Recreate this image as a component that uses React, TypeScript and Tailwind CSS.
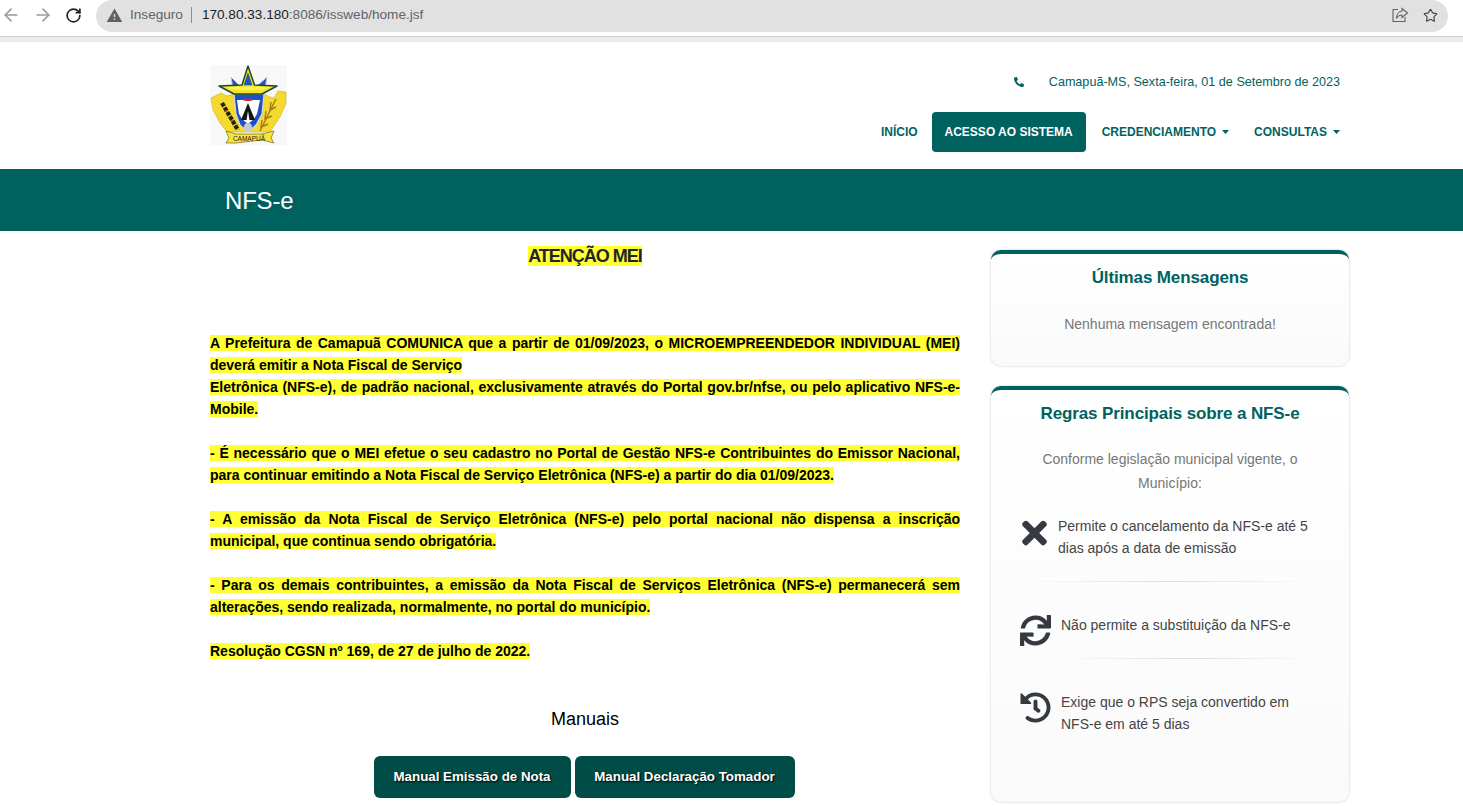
import React from 'react';
import { ArrowLeft, ArrowRight, RotateCw, Star } from 'lucide-react';
import { FaTimes, FaSync, FaHistory, FaPhone } from 'react-icons/fa';
import { MdWarning } from 'react-icons/md';

const CoatOfArms: React.FC = () => (
  <svg viewBox="0 0 77 80" className="w-[77px] h-[80px] bg-[#f8f8f8]">
    {/* side wreath */}
    <path d="M1 33 L11 28 L17 31 L24 29 L54 29 L60 32 L64 33 L68 26 L76 27 L76 38 L70 52 L60 67 L17 67 L10 58 L3 45 Z" fill="#f6d92f" stroke="#c0a622" strokeWidth="0.5" />
    {/* blue points behind the star */}
    <path d="M21 12 L30 21 L47 21 L57 12 L54 30 L24 30 Z" fill="#1f55cc" stroke="#c4c8d6" strokeWidth="1" />
    {/* shield */}
    <path d="M24 29 L54 29 L52 49 L46 60 L38 67 L30 60 L26 49 Z" fill="#1f4fc4" stroke="#d4d7e0" strokeWidth="1.2" />
    <path d="M27 35 L50 35 L47 49 L44 54 L38 59 L32 54 L29 49 Z" fill="#ffffff" />
    <path d="M38 38 L31 55 L36.5 55 L38 46 L39.5 55 L45 55 Z" fill="#141414" />
    <path d="M34 36 L35 33 L38 35 L41 33 L42 36 Z" fill="#e5352a" />
    <circle cx="38" cy="62" r="4" fill="#c6c9cf" />
    {/* star */}
    <path d="M38 1 L44.5 20 L67 21 L52 29 L24 29 L9 21 L32 20 Z" fill="#f4e52c" stroke="#1e4a2c" strokeWidth="1.5" strokeLinejoin="round" />
    <path d="M38 8 L34 20 L42 20 Z" fill="#1f55cc" stroke="#1e4a2c" strokeWidth="0.5" />
    <path d="M15 22 L61 22 L52 25 L24 25 Z" fill="#fdf15a" />
    {/* branches */}
    <path d="M12 38 L28 65" stroke="#1e2410" strokeWidth="4.2" strokeDasharray="4 1.2" />
    <circle cx="16" cy="46" r="1" fill="#c2372a" />
    <circle cx="22" cy="56" r="1" fill="#c2372a" />
    <path d="M66 34 L50 66 M61 37 L60 45 L66 42 M56 46 L55 54 L62 51 M52 55 L51 62 L58 59" stroke="#a67a18" strokeWidth="1.4" fill="none" />
    {/* ribbon */}
    <path d="M16 66 L26 69 L52 69 L64 66 L61 73 L64 78 L52 75 L26 78 L16 78 L19 73 Z" fill="#f7e53a" stroke="#5a5210" strokeWidth="0.6" />
    <text x="39" y="76" textAnchor="middle" fontSize="6.5" fontFamily="Liberation Sans, sans-serif" fill="#222222">CAMAPUÃ</text>
  </svg>
);

const ShareIcon: React.FC = () => (
  <svg viewBox="0 0 18 18" className="w-[18px] h-[18px]" fill="none" stroke="#5f6368" strokeWidth="1.1">
    <path d="M7 3.5 H2 V15.5 H14 V11" />
    <path d="M11 2.5 L16.5 7 L11 11.5 V9 C8 9 6.5 10.5 5.5 12.5 C5.5 9 7.5 5.5 11 5 Z" />
  </svg>
);

const Caret: React.FC = () => (
  <svg viewBox="0 0 7 4" className="ml-[6px] mt-[-1px] w-[7px] h-[4px]">
    <path d="M0 0 H7 L3.5 4 Z" fill="#00625f" />
  </svg>
);

const BrowserBar: React.FC = () => (
  <div className="h-[37px] bg-white border-b border-[#cfcfcf] flex items-start">
    <div className="w-[96px] flex items-center h-[32px] pl-[1px] pb-[2px]">
      <ArrowLeft size={20} className="text-[#9b9b9b]" />
      <ArrowRight size={20} className="ml-[12px] text-[#9b9b9b]" />
      <RotateCw size={17} strokeWidth={2.4} className="ml-[12px] text-[#222222]" />
    </div>
    <div className="w-[1352px] h-[32px] bg-[#e1e1e1] rounded-[16px] flex items-center px-[10px] pb-[2px]">
      <MdWarning size={17} className="text-[#5f6368]" />
      <span className="ml-[7px] text-[#5f6368] text-[13.6px]">Inseguro</span>
      <span className="w-px h-[16px] bg-[#8d8d8d] mx-[8px]" />
      <span className="ml-[2px] text-[#202124] text-[13.6px]">170.80.33.180<span className="text-[#5f6368]">:8086/issweb/home.jsf</span></span>
      <div className="ml-auto flex items-center">
        <ShareIcon />
        <Star size={15} strokeWidth={1.8} className="ml-[14px] text-[#444444]" />
      </div>
    </div>
  </div>
);

const Header: React.FC = () => (
  <header className="h-[127px] bg-white flex justify-between pl-[210px] pr-[123px]">
    <div className="pt-[23px]">
      <CoatOfArms />
    </div>
    <div className="flex flex-col items-end">
      <div className="mt-[31px] h-[18px] flex items-center text-[12.6px] text-[#00625f]">
        <FaPhone size={10} className="mr-[25px] scale-x-[-1]" />
        <span>Camapuã-MS, Sexta-feira, 01 de Setembro de 2023</span>
      </div>
      <nav className="mt-[21px] flex items-center text-[12px] font-bold text-[#00625f]">
        <a className="mr-[14px]">INÍCIO</a>
        <a className="h-[40px] w-[154px] flex items-center justify-center bg-[#00625f] text-white rounded-[4px]">ACESSO AO SISTEMA</a>
        <a className="ml-[16px] flex items-center">CREDENCIAMENTO<Caret /></a>
        <a className="ml-[25px] flex items-center">CONSULTAS<Caret /></a>
      </nav>
    </div>
  </header>
);

const Notice: React.FC<{ children: React.ReactNode }> = ({ children }) => (
  <p className="text-justify mb-[22px]">
    <span className="bg-[#ffff33]">{children}</span>
  </p>
);

const MainColumn: React.FC = () => (
  <section className="w-[750px] text-black">
    <h2 className="text-center text-[18px] leading-[20px] font-bold text-[#212529] tracking-[-1px] mt-[15px]">
      <span className="bg-[#ffff33]">ATENÇÃO MEI</span>
    </h2>
    <div className="mt-[66px] text-[14px] leading-[22px] font-bold">
      <Notice>
        A Prefeitura de Camapuã COMUNICA que a partir de 01/09/2023, o MICROEMPREENDEDOR INDIVIDUAL (MEI) deverá emitir a Nota Fiscal de Serviço
        <br />
        Eletrônica (NFS-e), de padrão nacional, exclusivamente através do Portal gov.br/nfse, ou pelo aplicativo NFS-e-Mobile.
      </Notice>
      <Notice>
        - É necessário que o MEI efetue o seu cadastro no Portal de Gestão NFS-e Contribuintes do Emissor Nacional, para continuar emitindo a Nota Fiscal de Serviço Eletrônica (NFS-e) a partir do dia 01/09/2023.
      </Notice>
      <Notice>
        - A emissão da Nota Fiscal de Serviço Eletrônica (NFS-e) pelo portal nacional não dispensa a inscrição municipal, que continua sendo obrigatória.
      </Notice>
      <Notice>
        - Para os demais contribuintes, a emissão da Nota Fiscal de Serviços Eletrônica (NFS-e) permanecerá sem alterações, sendo realizada, normalmente, no portal do município.
      </Notice>
      <Notice>Resolução CGSN nº 169, de 27 de julho de 2022.</Notice>
    </div>
    <h3 className="text-center text-[18px] leading-[22px] mt-[46px]">Manuais</h3>
    <div className="mt-[26px] flex justify-center gap-[4px] pr-[2px]">
      <a className="h-[42px] w-[197px] flex items-center justify-center rounded-[6px] bg-[#004d47] text-white text-[13.33px] font-bold [text-shadow:1px_1px_2px_#000000]">Manual Emissão de Nota</a>
      <a className="h-[42px] w-[220px] flex items-center justify-center rounded-[6px] bg-[#004d47] text-white text-[13.33px] font-bold [text-shadow:1px_1px_2px_#000000]">Manual Declaração Tomador</a>
    </div>
  </section>
);

const Card: React.FC<{ title: string; className: string; children: React.ReactNode }> = ({ title, className, children }) => (
  <div className={`rounded-[10px] border-t-4 border-[#00625f] bg-gradient-to-b from-white to-[#fafafa] shadow-[0_0_2px_rgba(0,0,0,0.3)] ${className}`}>
    <h4 className="text-center text-[17px] tracking-[-0.12px] leading-[22px] font-bold text-[#00625f] mt-[13px]">{title}</h4>
    {children}
  </div>
);

const Rule: React.FC<{ icon: React.ReactNode; textClass: string; children: React.ReactNode }> = ({ icon, textClass, children }) => (
  <div className="flex items-start pl-[29px] text-[14px] leading-[22px] text-[#444444]">
    {icon}
    <p className={textClass}>{children}</p>
  </div>
);

const Divider: React.FC<{ className: string }> = ({ className }) => (
  <div className={`h-px bg-gradient-to-r from-transparent via-[#dddddd] to-transparent ${className}`} />
);

const Sidebar: React.FC = () => (
  <aside className="w-[358px] ml-[31px] pt-[19px] flex flex-col gap-[20px]">
    <Card title="Últimas Mensagens" className="h-[116px]">
      <p className="text-center text-[14px] leading-[24px] text-[#777777] mt-[23px]">Nenhuma mensagem encontrada!</p>
    </Card>
    <Card title="Regras Principais sobre a NFS-e" className="h-[416px]">
      <p className="text-center text-[14px] leading-[24px] text-[#777777] mt-[22px] px-[40px]">
        Conforme legislação municipal vigente, o Município:
      </p>
      <div className="mt-[20px]">
        <Rule icon={<FaTimes className="w-[25px] h-[36px] text-[#343a40] ml-[2px] mr-[11px] shrink-0" />} textClass="w-[255px]">
          Permite o cancelamento da NFS-e até 5 dias após a data de emissão
        </Rule>
        <Divider className="mt-[22px] mx-[30px]" />
        <Rule icon={<FaSync size={31} className="text-[#343a40] mt-[33px] mr-[10px] -mb-[10px] shrink-0" />} textClass="w-[255px] mt-[32px]">
          Não permite a substituição da NFS-e
        </Rule>
        <Divider className="mt-[22px] ml-[70px] mr-[32px]" />
        <Rule icon={<FaHistory size={31} className="text-[#343a40] mt-[33px] mr-[10px] shrink-0" />} textClass="w-[255px] mt-[32px]">
          Exige que o RPS seja convertido em NFS-e em até 5 dias
        </Rule>
      </div>
    </Card>
  </aside>
);

export default function App() {
  return (
    <div className="h-[806px] overflow-hidden bg-white font-['Liberation_Sans',Arial,sans-serif]">
      <BrowserBar />
      <div className="h-[5px] bg-[#ebebeb]" />
      <Header />
      <div className="h-[62px] bg-[#00625f] flex items-center pl-[225px] pt-[1px] text-white text-[24px] tracking-[-0.2px]">NFS-e</div>
      <main className="flex pl-[210px]">
        <MainColumn />
        <Sidebar />
      </main>
    </div>
  );
}
